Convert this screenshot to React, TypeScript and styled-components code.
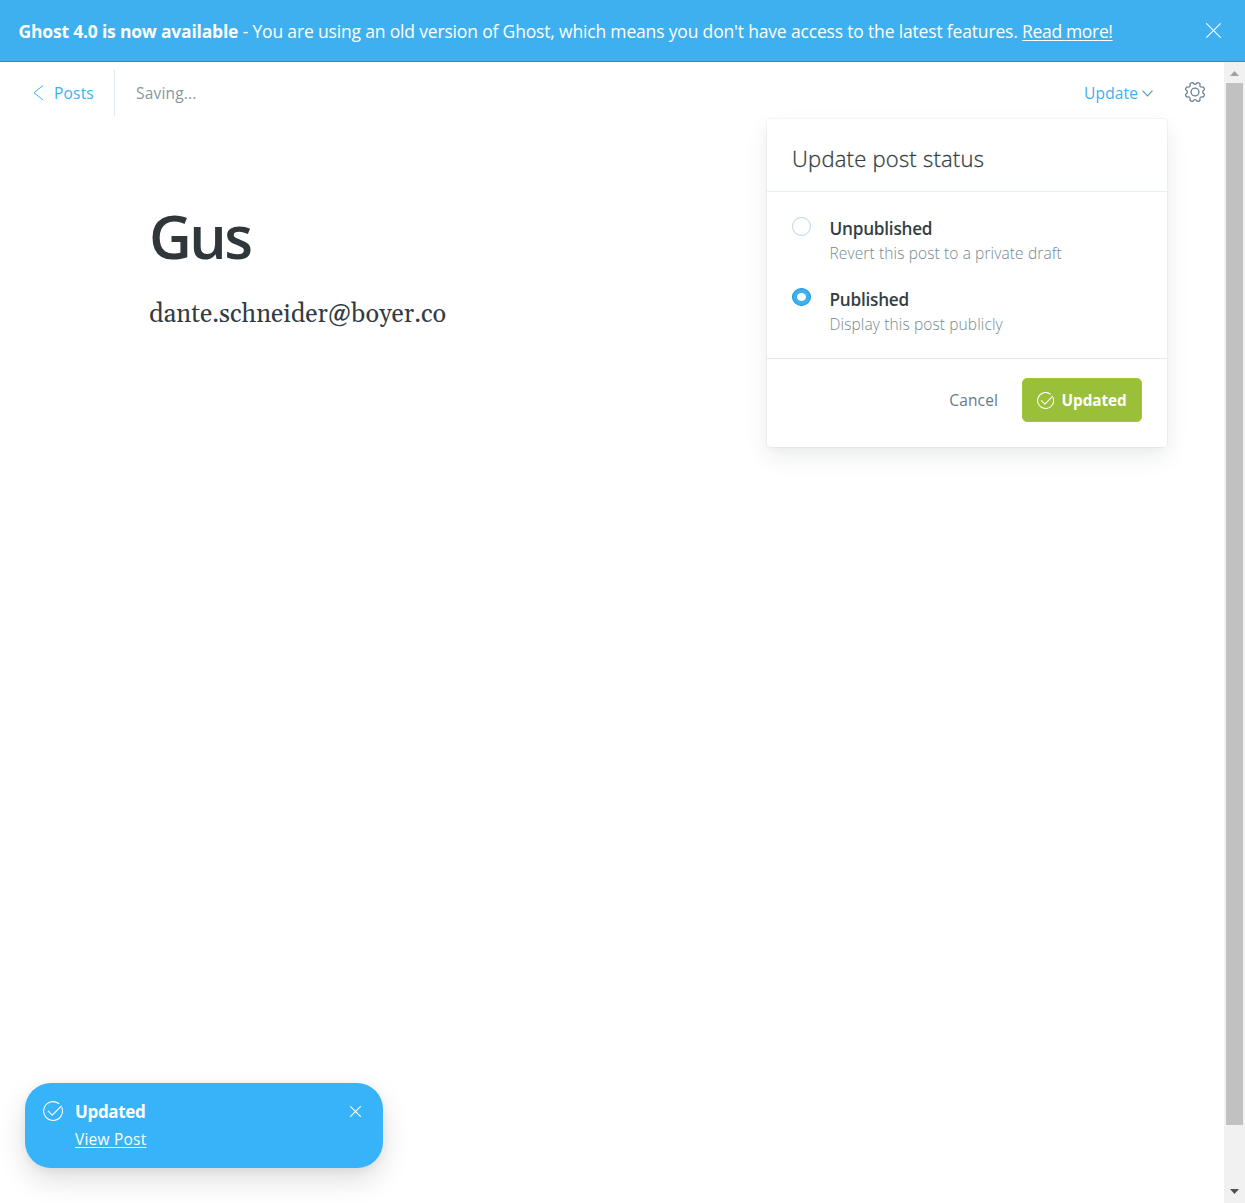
import React from 'react';
import styled, { createGlobalStyle } from 'styled-components';

const GlobalStyle = createGlobalStyle`
  *, *::before, *::after { box-sizing: border-box; }
  body {
    margin: 0;
    background: #fff;
    font-family: "Open Sans", "Noto Sans", sans-serif;
    color: #394047;
  }
`;

const Page = styled.div`
  position: relative;
  display: flex;
  flex-direction: column;
  height: 1203px;
  overflow: hidden;
`;

const Banner = styled.div`
  display: flex;
  align-items: center;
  justify-content: space-between;
  flex: none;
  height: 62px;
  padding: 1px 24px 0 18.5px;
  background: #3eb0ef;
  border-bottom: 1px solid #1b93da;
  color: #fff;
`;

const BannerText = styled.p`
  margin: 0 0 1px;
  font-size: 17.5px;
  line-height: 24px;
  letter-spacing: -0.17px;
  white-space: nowrap;
`;

const BannerTitle = styled.b`
  font-weight: 700;
  letter-spacing: -0.2px;
`;

const BannerLink = styled.a`
  color: #fff;
  letter-spacing: -0.33px;
  text-decoration: underline;
  text-underline-offset: 2px;
`;

const Body = styled.div`
  display: flex;
  flex: 1;
  min-height: 0;
`;

const Editor = styled.main`
  flex: 1;
  min-width: 0;
`;

const Toolbar = styled.header`
  display: flex;
  align-items: center;
  justify-content: space-between;
  height: 62px;
  padding: 0 18px 0 33px;
`;

const ToolbarGroup = styled.div`
  display: flex;
  align-items: center;
`;

const BackLink = styled.a`
  display: flex;
  align-items: center;
  gap: 10px;
  height: 46px;
  width: 82px;
  border-right: 1px solid #dfe9f1;
  color: #3eb0ef;
  font-size: 15.5px;
  letter-spacing: 0.2px;
`;

const SaveStatus = styled.span`
  padding-left: 21px;
  color: #86979f;
  font-size: 15.5px;
  letter-spacing: 0.18px;
`;

const UpdateTrigger = styled.button`
  display: flex;
  align-items: center;
  gap: 4px;
  margin-right: 31px;
  padding: 0;
  border: 0;
  background: none;
  color: #3eb0ef;
  font: 400 15.5px/24px "Open Sans", sans-serif;
  letter-spacing: 0.13px;
`;

const IconButton = styled.button<{ $lift?: number }>`
  display: flex;
  padding: 0;
  margin-bottom: ${(p) => p.$lift ?? 0}px;
  border: 0;
  background: none;
  color: inherit;
`;

const Post = styled.article`
  padding: 74px 0 0 149px;
`;

const PostTitle = styled.h1`
  margin: 0;
  color: #2f373b;
  font-size: 59px;
  font-weight: 600;
  line-height: 76px;
  letter-spacing: -2.5px;
`;

const PostBody = styled.p`
  margin: 23px 0 0;
  color: #333c42;
  font-family: Gelasio, Georgia, "Liberation Serif", serif;
  font-size: 25.3px;
  line-height: 36px;
`;

const ScrollTrack = styled.div`
  display: flex;
  flex-direction: column;
  align-items: center;
  width: 21px;
  background: #f1f1f1;
`;

const ScrollArrow = styled.div<{ $end?: boolean }>`
  display: flex;
  align-items: center;
  justify-content: center;
  height: 21px;
  padding: ${(p) => (p.$end ? '0 0 2px' : '2px 0 0')};
`;

const ScrollThumb = styled.div`
  width: 17px;
  height: 1042px;
  background: #c1c1c1;
`;

const Spacer = styled.div`
  flex: 1;
`;

const Popover = styled.section`
  position: absolute;
  top: 119px;
  left: 767px;
  width: 400px;
  height: 328px;
  background: #fff;
  border-radius: 4px;
  box-shadow: 0 0 0 1px rgba(99, 114, 130, 0.06), 0 10px 24px rgba(27, 39, 51, 0.08),
    0 3px 8px rgba(27, 39, 51, 0.03);
`;

const PopoverHeader = styled.h2`
  height: 73px;
  margin: 0;
  padding: 23px 25px 0;
  border-bottom: 1px solid #e5eff5;
  color: #343f44;
  font-size: 22px;
  font-weight: 300;
  line-height: 32px;
  letter-spacing: 0.23px;
  -webkit-text-stroke: 0.3px #343f44;
`;

const OptionList = styled.div`
  height: 167px;
  padding: 24px 25px 0;
  border-bottom: 1px solid #dfeaf2;
`;

const Option = styled.div`
  display: flex;
  gap: 18.5px;
  height: 71px;
`;

const Radio = styled.span<{ $checked?: boolean }>`
  display: flex;
  align-items: center;
  justify-content: center;
  flex: none;
  width: 19px;
  height: ${(p) => (p.$checked ? 18 : 19)}px;
  margin-top: 1px;
  border: 1px solid ${(p) => (p.$checked ? '#1f95dc' : '#b9d4e6')};
  border-radius: 50%;
  background: ${(p) => (p.$checked ? '#3eb0ef' : '#fff')};

  &::after {
    content: '';
    display: ${(p) => (p.$checked ? 'block' : 'none')};
    width: 9px;
    height: 8px;
    border-radius: 50%;
    background: #fff;
  }
`;

const OptionLabel = styled.div`
  color: #343f44;
  font-size: 17.2px;
  font-weight: 600;
  line-height: 25px;
  letter-spacing: -0.24px;
`;

const OptionHint = styled.div`
  color: #748891;
  font-size: 15.5px;
  font-weight: 300;
  line-height: 24px;
  letter-spacing: 0.12px;
`;

const PopoverFooter = styled.footer`
  display: flex;
  align-items: center;
  justify-content: flex-end;
  gap: 24px;
  padding: 19px 25px 0;
`;

const CancelButton = styled.button`
  padding: 0;
  border: 0;
  background: none;
  color: #667a84;
  font: 400 15.5px/24px "Open Sans", sans-serif;
  letter-spacing: 0.12px;
`;

const UpdatedButton = styled.button`
  display: flex;
  align-items: center;
  gap: 7.5px;
  width: 120px;
  height: 44px;
  padding: 0 0 0 14px;
  border: 1px solid #a0c83a;
  border-radius: 5px;
  background: #9abf39;
  color: #fff;
  font: 700 15.3px/24px "Open Sans", sans-serif;
  letter-spacing: -0.05px;
`;

const Toast = styled.aside`
  position: absolute;
  left: 25px;
  top: 1083px;
  display: flex;
  width: 358px;
  height: 85px;
  padding: 18px 22.5px 0 18px;
  border-radius: 26px;
  background: #36b3f9;
  color: #fff;
  box-shadow: 0 12px 28px rgba(0, 0, 0, 0.13), 0 2px 8px rgba(0, 0, 0, 0.06);
`;

const ToastContent = styled.div`
  display: flex;
  flex: 1;
  flex-direction: column;
  align-items: flex-start;
  padding-left: 12px;
  margin-top: -1px;
`;

const ToastTitle = styled.strong`
  font-size: 17px;
  font-weight: 700;
  line-height: 24px;
  letter-spacing: -0.35px;
`;

const ToastLink = styled.a`
  margin-top: 4px;
  font-size: 15.5px;
  line-height: 22px;
  letter-spacing: 0.22px;
  text-decoration: underline;
  text-underline-offset: 2px;
`;

const ToastClose = styled.button`
  display: flex;
  align-self: flex-start;
  margin-top: 4.5px;
  padding: 0;
  border: 0;
  background: none;
  color: inherit;
`;

const Cross = ({ size, weight }: { size: number; weight: number }) => (
  <svg width={size} height={size} viewBox={`0 0 ${size} ${size}`} fill="none" stroke="currentColor" strokeWidth={weight} strokeLinecap="round">
    <path d={`M.6 .6 L${size - 0.6} ${size - 0.6} M${size - 0.6} .6 L.6 ${size - 0.6}`} />
  </svg>
);

const CheckCircle = ({ size, weight }: { size: number; weight: number }) => (
  <svg width={size} height={size} viewBox="0 0 20 20" fill="none" stroke="currentColor" strokeWidth={weight} strokeLinecap="round" strokeLinejoin="round">
    <path d="M18.9 6.8A9.4 9.4 0 1 1 15.7 2.5" />
    <path d="M5.2 10.1L9.3 14.2L18.2 5.2" />
  </svg>
);

const polar = (r: number, deg: number) => {
  const a = (deg * Math.PI) / 180;
  return `${(11 + r * Math.cos(a)).toFixed(2)} ${(11 + r * Math.sin(a)).toFixed(2)}`;
};

// Eight rounded teeth joined by curved valleys.
const gearPath =
  Array.from({ length: 8 }, (_, i) => {
    const a = i * 45 + 22.5;
    return `${i ? 'L' : 'M'}${polar(9.6, a - 9)}Q${polar(10.5, a)} ${polar(9.6, a + 9)}C${polar(7.1, a + 15)} ${polar(7.1, a + 30)} ${polar(9.6, a + 36)}`;
  }).join('') + 'Z';

const Gear = () => (
  <svg width="22" height="22" viewBox="0 0 22 22" fill="none" stroke="#6c838f" strokeWidth="1.35" strokeLinejoin="round">
    <path d={gearPath} />
    <circle cx="11" cy="11" r="3.9" />
  </svg>
);

export default function App() {
  return (
    <Page>
      <GlobalStyle />
      <Banner>
        <BannerText>
          <BannerTitle>Ghost 4.0 is now available</BannerTitle> - You are using an old version of Ghost, which means
          you don't have access to the latest features. <BannerLink>Read more!</BannerLink>
        </BannerText>
        <IconButton $lift={1} aria-label="Dismiss">
          <Cross size={15} weight={1.1} />
        </IconButton>
      </Banner>
      <Body>
        <Editor>
          <Toolbar>
            <ToolbarGroup>
              <BackLink>
                <svg width="11" height="16" viewBox="0 0 11 16" fill="none" stroke="currentColor" strokeWidth="1">
                  <path d="M10 .5L1 7.7L10 15" />
                </svg>
                Posts
              </BackLink>
              <SaveStatus>Saving...</SaveStatus>
            </ToolbarGroup>
            <ToolbarGroup>
              <UpdateTrigger>
                Update
                <svg width="11" height="7" viewBox="0 0 11 7" fill="none" stroke="#5c93b4" strokeWidth="1.1">
                  <path d="M.5 .7L5.5 6L10.5 .7" />
                </svg>
              </UpdateTrigger>
              <IconButton $lift={2} aria-label="Settings">
                <Gear />
              </IconButton>
            </ToolbarGroup>
          </Toolbar>
          <Post>
            <PostTitle>Gus</PostTitle>
            <PostBody>dante.schneider@boyer.co</PostBody>
          </Post>
        </Editor>
        <ScrollTrack>
          <ScrollArrow>
            <svg width="9" height="5" viewBox="0 0 9 5">
              <path d="M4.5 0L9 5H0Z" fill="#a0a0a0" />
            </svg>
          </ScrollArrow>
          <ScrollThumb />
          <Spacer />
          <ScrollArrow $end>
            <svg width="9" height="5" viewBox="0 0 9 5">
              <path d="M0 0H9L4.5 5Z" fill="#505050" />
            </svg>
          </ScrollArrow>
        </ScrollTrack>
      </Body>

      <Popover>
        <PopoverHeader>Update post status</PopoverHeader>
        <OptionList>
          <Option>
            <Radio />
            <div>
              <OptionLabel>Unpublished</OptionLabel>
              <OptionHint>Revert this post to a private draft</OptionHint>
            </div>
          </Option>
          <Option>
            <Radio $checked />
            <div>
              <OptionLabel>Published</OptionLabel>
              <OptionHint>Display this post publicly</OptionHint>
            </div>
          </Option>
        </OptionList>
        <PopoverFooter>
          <CancelButton>Cancel</CancelButton>
          <UpdatedButton>
            <CheckCircle size={17} weight={1.3} />
            Updated
          </UpdatedButton>
        </PopoverFooter>
      </Popover>

      <Toast>
        <CheckCircle size={20} weight={1.1} />
        <ToastContent>
          <ToastTitle>Updated</ToastTitle>
          <ToastLink>View Post</ToastLink>
        </ToastContent>
        <ToastClose aria-label="Close">
          <Cross size={11} weight={1.2} />
        </ToastClose>
      </Toast>
    </Page>
  );
}
